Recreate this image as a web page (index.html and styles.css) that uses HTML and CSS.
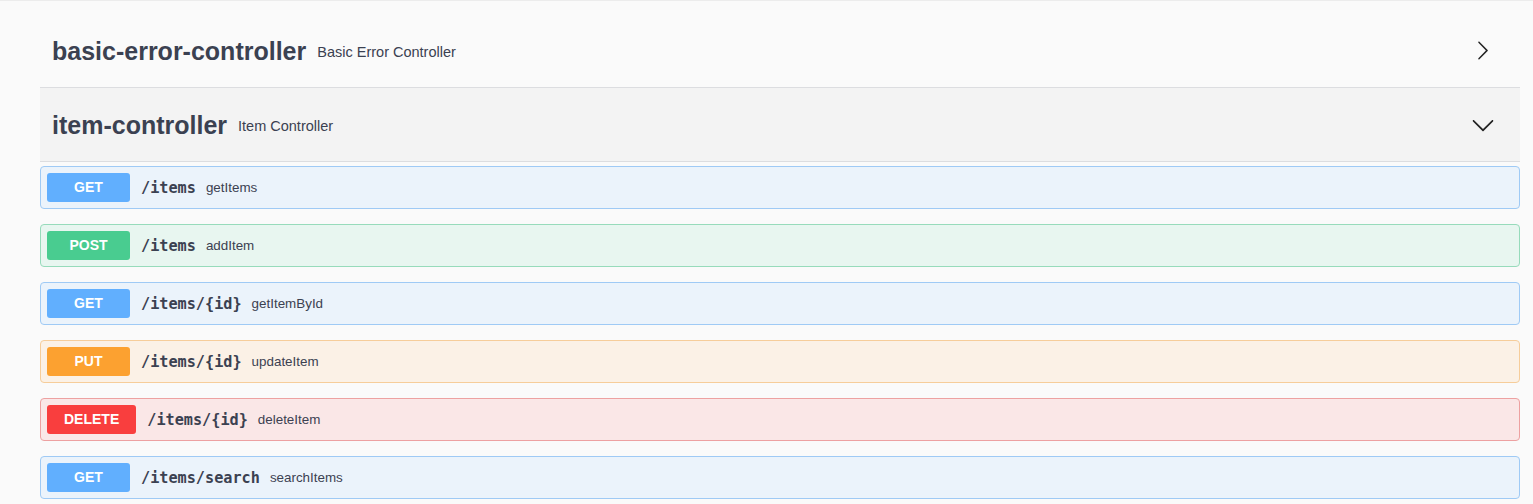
FILE: index.html
```html
<!DOCTYPE html>
<html>
<head>
<meta charset="utf-8">
<link rel="stylesheet" href="styles.css">
</head>
<body>
<div class="wrapper">
  <section class="tag">
    <div class="tag-header">
      <h3 class="tag-title">basic-error-controller</h3>
      <span class="tag-desc">Basic Error Controller</span>
      <svg class="arrow arrow-right" viewBox="0 0 20 20"><path d="M13.25 10L6.109 2.58c-.268-.27-.268-.707 0-.979.268-.27.701-.27.969 0l7.830 7.908c.268.271.268.709 0 .979l-7.83 7.908c-.268.271-.701.27-.969 0-.268-.269-.268-.707 0-.979L13.25 10z"/></svg>
    </div>
  </section>
  <section class="tag open">
    <div class="tag-header hovered">
      <h3 class="tag-title">item-controller</h3>
      <span class="tag-desc">Item Controller</span>
      <svg class="arrow arrow-down" viewBox="0 0 20 20"><path d="M17.418 6.109c.272-.268.709-.268.979 0s.271.701 0 .969l-7.908 7.83c-.27.268-.707.268-.979 0l-7.908-7.83c-.27-.268-.27-.701 0-.969.271-.268.709-.268.979 0L10 13.25l7.418-7.141z"/></svg>
    </div>
    <div class="ops">
      <div class="op get"><span class="method">GET</span><span class="path">/items</span><span class="desc">getItems</span></div>
      <div class="op post"><span class="method">POST</span><span class="path">/items</span><span class="desc">addItem</span></div>
      <div class="op get"><span class="method">GET</span><span class="path">/items/{id}</span><span class="desc">getItemById</span></div>
      <div class="op put"><span class="method">PUT</span><span class="path">/items/{id}</span><span class="desc">updateItem</span></div>
      <div class="op delete"><span class="method">DELETE</span><span class="path">/items/{id}</span><span class="desc">deleteItem</span></div>
      <div class="op get"><span class="method">GET</span><span class="path">/items/search</span><span class="desc">searchItems</span></div>
    </div>
  </section>
</div>
</body>
</html>
```
FILE: styles.css
```css
html, body {
  margin: 0;
  padding: 0;
  background: #fafafa;
}
body {
  border-top: 1px solid #ececec;
  font-family: "Liberation Sans", Arial, sans-serif;
  color: #3b4151;
}
.wrapper {
  padding: 13px 13px 0 40px;
}
.tag-header {
  display: flex;
  align-items: center;
  height: 73px;
  padding: 0 25px 0 12px;
  border-bottom: 1px solid #dcdde0;
}
.tag-header.hovered {
  background: #f3f3f3;
}
.tag.open .tag-header {
  margin-bottom: 4px;
}
.tag-title {
  margin: 2px 0 0;
  font-size: 25px;
  font-weight: bold;
  color: #3b4151;
}
.tag-desc {
  margin-top: 2px;
  font-size: 14.5px;
  padding: 0 10px 0 11px;
  color: #3b4151;
  flex: 1;
}
.arrow {
  fill: #222;
  flex: none;
}
.arrow-right {
  width: 21px;
  height: 21px;
  margin-right: 2px;
}
.arrow-down {
  width: 24px;
  height: 24px;
}
.ops {
  display: flex;
  flex-direction: column;
  gap: 15px;
}
.op {
  display: flex;
  align-items: center;
  height: 43px;
  box-sizing: border-box;
  padding: 0 6px;
  border: 1px solid;
  border-radius: 4px;
}
.method {
  box-sizing: border-box;
  min-width: 83px;
  height: 29px;
  line-height: 29px;
  padding: 0 17px;
  border-radius: 3px;
  color: #fff;
  font-size: 14px;
  font-weight: bold;
  text-align: center;
}
.path {
  padding: 0 10px 0 11px;
  font-family: "DejaVu Sans Mono", monospace;
  font-weight: bold;
  font-size: 15.2px;
  color: #3b4151;
}
.desc {
  font-size: 13.4px;
  color: #3b4151;
}
.get { background: #ebf3fb; border-color: #9fcaf5; }
.get .method { background: #61affe; }
.post { background: #e8f6f0; border-color: #97dbbb; }
.post .method { background: #49cc90; }
.put { background: #fbf1e6; border-color: #f6cd9a; }
.put .method { background: #fca130; }
.delete { background: #fae7e7; border-color: #eda1a1; }
.delete .method { background: #f93e3e; }
```
